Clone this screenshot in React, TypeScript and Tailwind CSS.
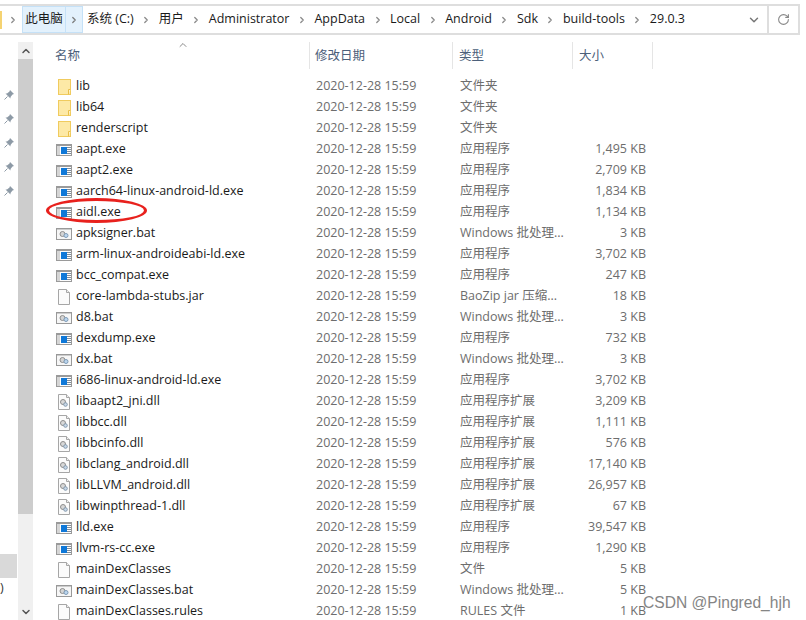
import React from 'react';
import { ChevronUp, ChevronDown, ChevronRight, RotateCw } from 'lucide-react';

type Kind = 'folder' | 'exe' | 'bat' | 'file' | 'dll';

const DATE = '2020-12-28 15:59';

const rows: { name: string; kind: Kind; type: string; size: string }[] = [
  { name: 'lib', kind: 'folder', type: '文件夹', size: '' },
  { name: 'lib64', kind: 'folder', type: '文件夹', size: '' },
  { name: 'renderscript', kind: 'folder', type: '文件夹', size: '' },
  { name: 'aapt.exe', kind: 'exe', type: '应用程序', size: '1,495 KB' },
  { name: 'aapt2.exe', kind: 'exe', type: '应用程序', size: '2,709 KB' },
  { name: 'aarch64-linux-android-ld.exe', kind: 'exe', type: '应用程序', size: '1,834 KB' },
  { name: 'aidl.exe', kind: 'exe', type: '应用程序', size: '1,134 KB' },
  { name: 'apksigner.bat', kind: 'bat', type: 'Windows 批处理...', size: '3 KB' },
  { name: 'arm-linux-androideabi-ld.exe', kind: 'exe', type: '应用程序', size: '3,702 KB' },
  { name: 'bcc_compat.exe', kind: 'exe', type: '应用程序', size: '247 KB' },
  { name: 'core-lambda-stubs.jar', kind: 'file', type: 'BaoZip jar 压缩...', size: '18 KB' },
  { name: 'd8.bat', kind: 'bat', type: 'Windows 批处理...', size: '3 KB' },
  { name: 'dexdump.exe', kind: 'exe', type: '应用程序', size: '732 KB' },
  { name: 'dx.bat', kind: 'bat', type: 'Windows 批处理...', size: '3 KB' },
  { name: 'i686-linux-android-ld.exe', kind: 'exe', type: '应用程序', size: '3,702 KB' },
  { name: 'libaapt2_jni.dll', kind: 'dll', type: '应用程序扩展', size: '3,209 KB' },
  { name: 'libbcc.dll', kind: 'dll', type: '应用程序扩展', size: '1,111 KB' },
  { name: 'libbcinfo.dll', kind: 'dll', type: '应用程序扩展', size: '576 KB' },
  { name: 'libclang_android.dll', kind: 'dll', type: '应用程序扩展', size: '17,140 KB' },
  { name: 'libLLVM_android.dll', kind: 'dll', type: '应用程序扩展', size: '26,957 KB' },
  { name: 'libwinpthread-1.dll', kind: 'dll', type: '应用程序扩展', size: '67 KB' },
  { name: 'lld.exe', kind: 'exe', type: '应用程序', size: '39,547 KB' },
  { name: 'llvm-rs-cc.exe', kind: 'exe', type: '应用程序', size: '1,290 KB' },
  { name: 'mainDexClasses', kind: 'file', type: '文件', size: '5 KB' },
  { name: 'mainDexClasses.bat', kind: 'bat', type: 'Windows 批处理...', size: '5 KB' },
  { name: 'mainDexClasses.rules', kind: 'file', type: 'RULES 文件', size: '1 KB' },
];

const crumbs = ['系统 (C:)', '用户', 'Administrator', 'AppData', 'Local', 'Android', 'Sdk', 'build-tools', '29.0.3'];

const FileIcon = ({ kind }: { kind: Kind }) => {
  if (kind === 'folder') {
    return (
      <svg width="16" height="16" viewBox="0 0 16 16">
        <rect x="2.5" y="0.5" width="12" height="15" fill="#fde9a6" stroke="#f0cb5e" />
        <path d="M12.5 15.5V10.5H14.5" fill="#fff4cc" stroke="#e9bf4a" />
      </svg>
    );
  }
  if (kind === 'exe') {
    return (
      <svg width="16" height="16" viewBox="0 0 16 16">
        <rect x="0" y="2" width="16" height="12" fill="#9a9a9a" />
        <rect x="1" y="4" width="14" height="9" fill="#fdfdfd" />
        <rect x="1" y="4" width="3" height="9" fill="#d5d5d5" />
        <rect x="5" y="5" width="6" height="7" fill="#0f78d8" />
        <path d="M11 5.5H15M11 7.5H15M11 9.5H15M11 11.5H15" stroke="#7f8c99" />
      </svg>
    );
  }
  if (kind === 'bat') {
    return (
      <svg width="16" height="16" viewBox="0 0 16 16">
        <rect x="0.5" y="2.5" width="15" height="11" fill="#f6f6f6" stroke="#999999" />
        <rect x="1" y="3" width="14" height="1" fill="#cccccc" />
        <circle cx="6.5" cy="8" r="2.5" fill="#d4d4d4" stroke="#8d8d8d" />
        <circle cx="10" cy="9.5" r="2" fill="#bcd6ee" stroke="#7f9cb8" />
      </svg>
    );
  }
  return (
    <svg width="16" height="16" viewBox="0 0 16 16">
      <path d="M2.5 0.5H10.5L13.5 3.5V15.5H2.5Z" fill="#fbfbfb" stroke="#a6a6a6" />
      <path d="M10.5 0.5V3.5H13.5" fill="#eeeeee" stroke="#a6a6a6" />
      {kind === 'dll' && (
        <>
          <circle cx="7" cy="8" r="2.5" fill="#d8d8d8" stroke="#8d8d8d" />
          <circle cx="9.5" cy="10.5" r="1.8" fill="#c8d8e8" stroke="#8499ad" />
        </>
      )}
    </svg>
  );
};

const Pin = () => (
  <svg width="12" height="12" viewBox="0 0 12 12" className="text-[#8d9aa6]">
    <path d="M7 1L11 5L9.5 5.5L7.5 8L7.5 9.5L2.5 4.5L4 4.5L6.5 2.5Z" fill="currentColor" />
    <path d="M4.5 7.5L1.5 10.5" stroke="currentColor" />
  </svg>
);

const App: React.FC = () => {
  return (
    <div className="relative h-[620px] w-[806px] overflow-hidden bg-white pt-1 font-['Open_Sans','Noto_Sans_CJK_SC',sans-serif] text-[12.5px]">
      {/* address bar */}
      <div className="mr-[6px] flex h-[31px] items-center border-y-2 border-r-2 border-[#dedede] text-[#1a1a1a]">
        <div className="h-[18px] w-[2px] shrink-0 bg-[#f5d372]" />
        <ChevronRight size={10} strokeWidth={3} className="ml-[6px] shrink-0 text-[#8a8a8a]" />
        <div className="ml-[4px] flex h-[27px] shrink-0 border border-[#c5e1f7] bg-[#e3f1fc]">
          <span className="flex w-[43px] items-center justify-center border-r border-[#c5e1f7]">此电脑</span>
          <span className="flex w-[16px] items-center justify-center">
            <ChevronRight size={10} strokeWidth={3} className="text-[#7c7c7c]" />
          </span>
        </div>
        <div className="ml-[4px] flex items-center gap-[7.5px]">
          {crumbs.map((c, i) => (
            <React.Fragment key={c}>
              <span className="whitespace-nowrap">{c}</span>
              {i < crumbs.length - 1 && <ChevronRight size={10} strokeWidth={3} className="text-[#8a8a8a]" />}
            </React.Fragment>
          ))}
        </div>
        <ChevronDown size={14} strokeWidth={2.5} className="ml-auto mr-[6px] text-[#777777]" />
        <div className="flex h-[27px] w-[31px] items-center justify-center border-l-2 border-[#dedede]">
          <RotateCw size={13} className="text-[#888888]" />
        </div>
      </div>

      <div className="mt-[7px] flex h-[578px]">
        {/* left nav strip */}
        <div className="flex w-[18px] shrink-0 flex-col overflow-hidden">
          <div className="flex h-[512px] flex-col items-end gap-[12px] pr-[3px] pt-[47px]">
            <Pin />
            <Pin />
            <Pin />
            <Pin />
            <Pin />
          </div>
          <div className="h-[24px] w-[17px] bg-[#d9d9d9]" />
          <div className="pt-[1px] text-[#333333]">)</div>
        </div>

        {/* scrollbar */}
        <div className="flex w-[15px] shrink-0 flex-col bg-[#f0f0f0]">
          <div className="flex h-[17px] items-center justify-center">
            <ChevronUp size={12} strokeWidth={3} className="text-[#555555]" />
          </div>
          <div className="h-[455px] bg-[#cdcdcd]" />
          <div className="mt-auto flex h-[17px] items-center justify-center">
            <ChevronDown size={12} strokeWidth={3} className="text-[#555555]" />
          </div>
        </div>

        {/* file list */}
        <div className="min-w-0 flex-1 pl-[3px]">
          <div className="relative flex h-[27px] text-[#4c607a]">
            <ChevronUp size={12} className="absolute left-[141px] -top-[3px] text-[#8a8a8a]" />
            <div className="flex w-[274px] items-center border-r border-[#e5e5e5] pl-[19px] pt-[2px]">名称</div>
            <div className="flex w-[143px] items-center border-r border-[#e5e5e5] pl-[5px] pt-[2px]">修改日期</div>
            <div className="flex w-[120px] items-center border-r border-[#e5e5e5] pl-[6px] pt-[2px]">类型</div>
            <div className="flex w-[80px] items-center border-r border-[#e5e5e5] pl-[6px] pt-[2px]">大小</div>
          </div>
          <div className="mt-[6px]">
            {rows.map(r => (
              <div key={r.name} className="flex h-[21px] items-center pt-[2px]">
                <div className="w-[20px] shrink-0" />
                <FileIcon kind={r.kind} />
                <div className="w-[238px] shrink-0 truncate pl-[4px] text-[#1a1a1a]">{r.name}</div>
                <div className="w-[144px] shrink-0 pl-[6px] text-[#6d6d6d]">{DATE}</div>
                <div className="w-[116px] shrink-0 whitespace-nowrap pl-[6px] text-[#6d6d6d]">{r.type}</div>
                <div className="w-[76px] shrink-0 text-right text-[#6d6d6d]">{r.size}</div>
              </div>
            ))}
          </div>
        </div>
      </div>

      {/* annotation */}
      <div className="absolute left-[46px] top-[198px] h-[25px] w-[101px] rounded-[50%] border-[3px] border-[#e8211d]" />
      <div className="absolute left-[643px] top-[591px] font-['Liberation_Sans',sans-serif] text-[15.6px] text-[#858585]">
        CSDN @Pingred_hjh
      </div>
    </div>
  );
};

export default App;
